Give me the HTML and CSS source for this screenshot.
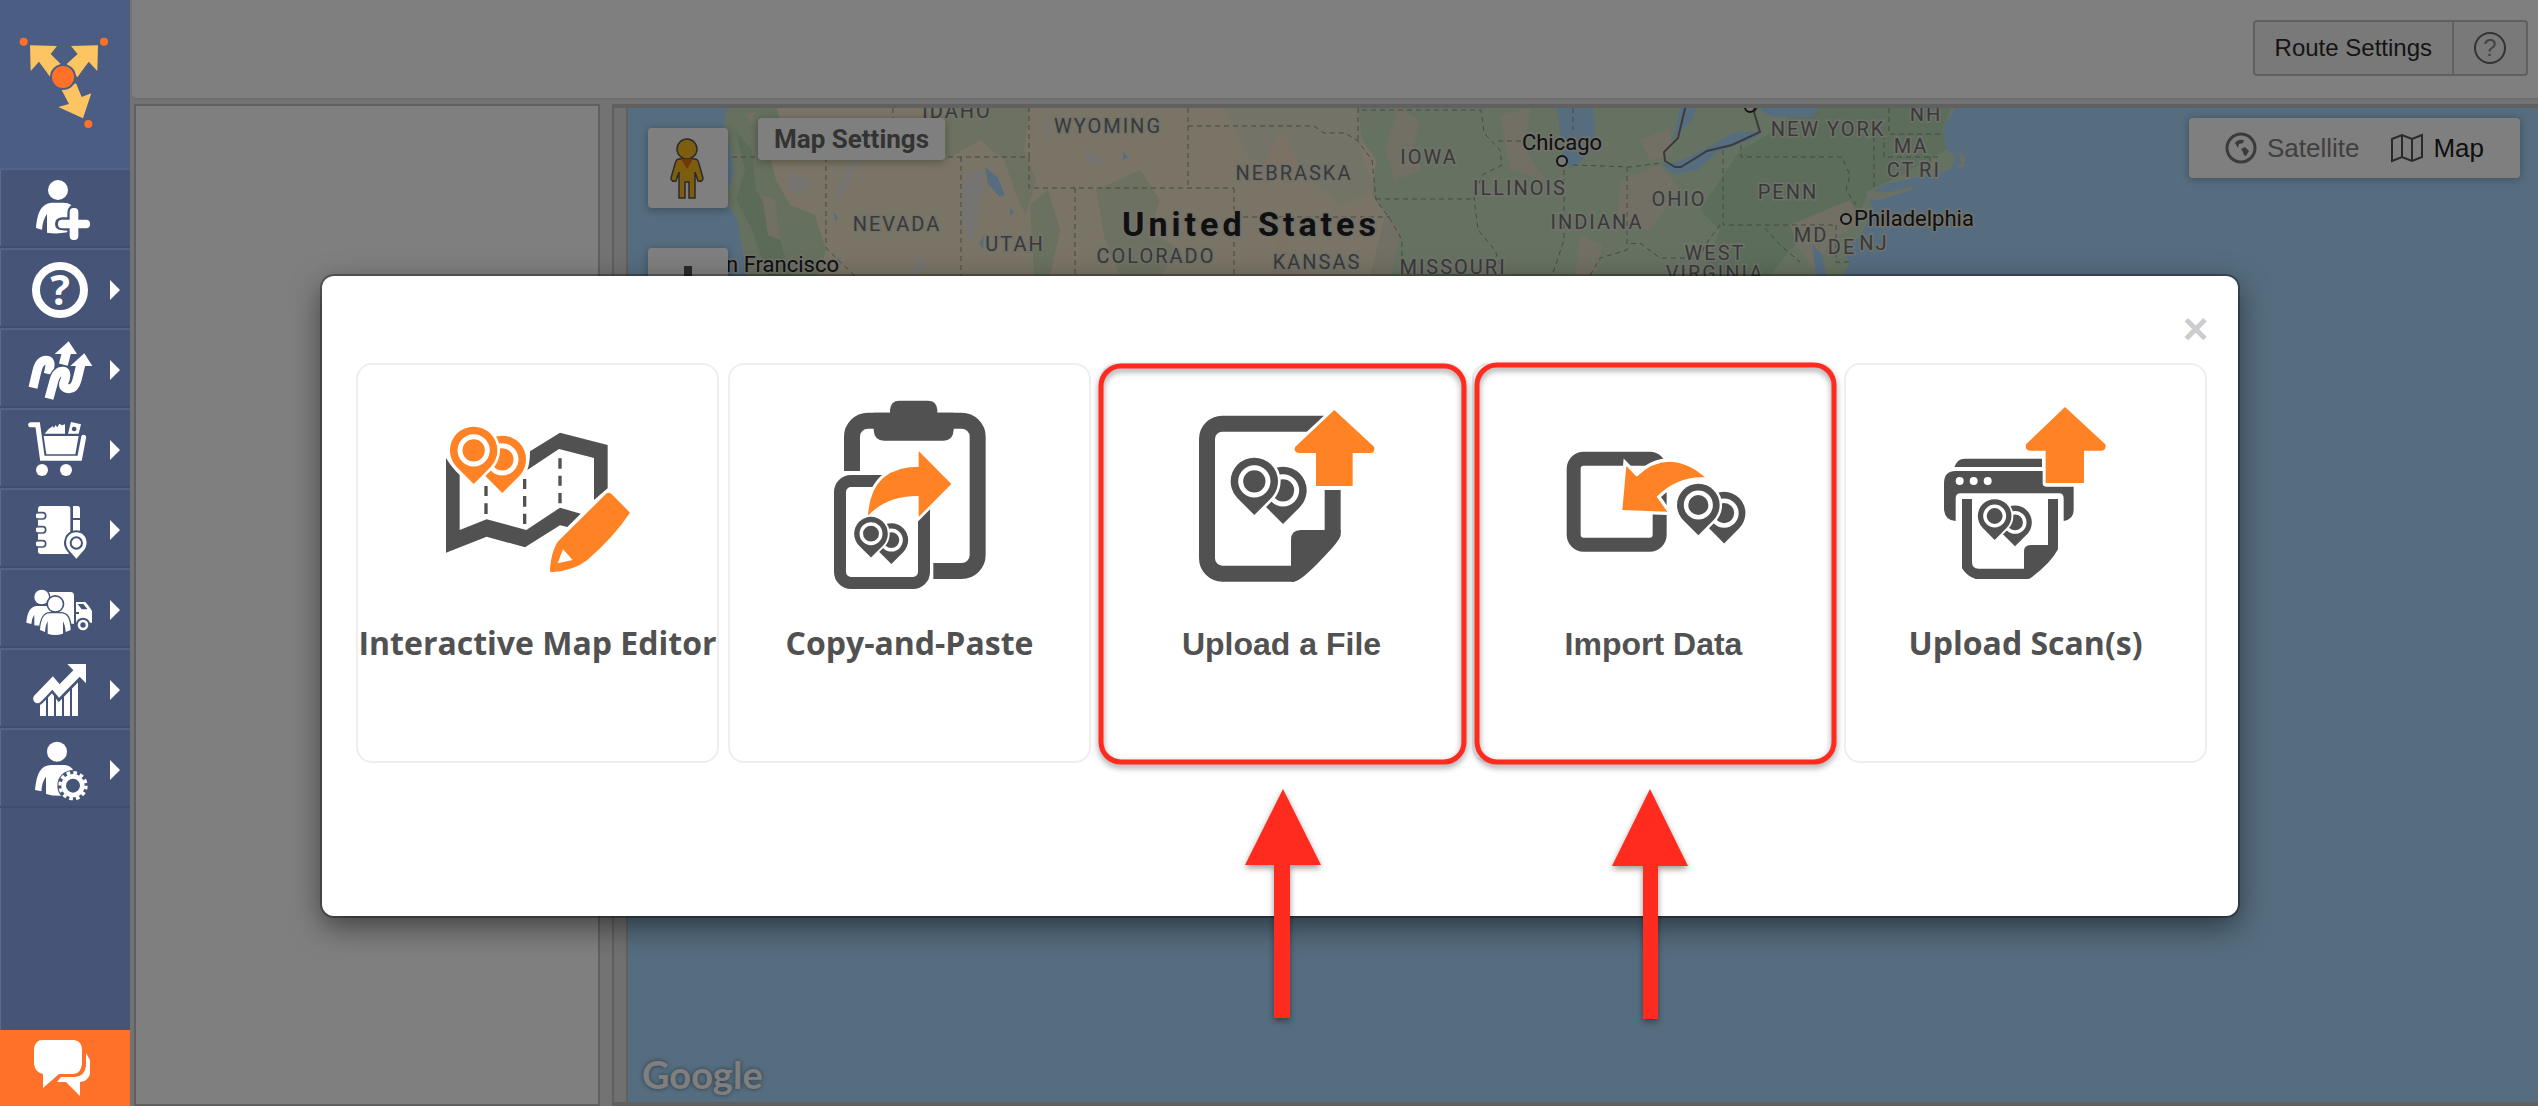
FILE: index.html
```html
<!DOCTYPE html>
<html lang="en">
<head>
    <meta charset="UTF-8">
    <meta name="viewport" content="width=device-width, initial-scale=1.0">
    <title>Route Planner</title>
    <link rel="stylesheet" href="styles.css">
</head>
<body>
    <!-- Shared shapes -->
    <svg class="defs" aria-hidden="true">
        <defs>
            <path id="pin" d="M0 101 L-51 50 C-64 36 -71 18 -71 0 A71 71 0 0 1 71 0 C71 18 64 36 51 50 Z"/>
            <g id="pins">
                <g transform="translate(86 27)">
                    <use href="#pin" fill="currentColor"/>
                    <circle r="41" fill="none" stroke="#fff" stroke-width="15"/>
                </g>
                <use href="#pin" fill="currentColor" stroke="#fff" stroke-width="16" paint-order="stroke"/>
                <circle r="41" fill="none" stroke="#fff" stroke-width="15"/>
            </g>
        </defs>
    </svg>

    <nav class="sidebar">
        <a class="logo" href="#" aria-label="Home">
            <svg viewBox="0 0 390 504">
                <g fill="#fdc562">
                    <path d="M90 136 L171 138 L152 162 L182 192 L150 230 L117 185 L92 213Z"/>
                    <path d="M294 136 L213 138 L233 162 L200 192 L232 232 L266 185 L292 213Z"/>
                    <path d="M185 270 L228 250 L245 291 L274 280 L249 355 L175 321 L207 312Z"/>
                </g>
                <circle cx="189" cy="231" r="36" fill="#ff7128" stroke="#4c5d83" stroke-width="6"/>
                <g fill="#ff7128">
                    <circle cx="71" cy="125" r="12"/>
                    <circle cx="312" cy="125" r="12"/>
                    <circle cx="265" cy="372" r="12"/>
                </g>
            </svg>
        </a>
        <a class="nav-item" href="#" aria-label="Add user">
            <svg viewBox="0 510 390 228">
                <circle cx="174" cy="570" r="30"/>
                <path d="M108 684 C112 640 122 608 160 608 H190 Q205 608 214 615 Q202 624 202 640 V652 H186 Q165 654 165 672 Q166 690 186 691 L202 692 V697 Q170 703 141 698 V642 Q128 660 126 689Z"/>
                <rect x="174" y="659" width="96" height="26" rx="12"/>
                <rect x="209" y="624" width="26" height="96" rx="12"/>
            </svg>
        </a>
        <a class="nav-item" href="#" aria-label="Help">
            <svg viewBox="0 750 390 228">
                <circle cx="180" cy="870" r="72" fill="none" stroke="#fff" stroke-width="24"/>
                <text class="help-mark" x="180" y="915" text-anchor="middle">?</text>
                <path d="M330 840 L360 870 L330 900Z"/>
            </svg>
        </a>
        <a class="nav-item" href="#" aria-label="Routes">
            <svg viewBox="0 990 390 228">
                <g fill="none" stroke="#fff" stroke-width="27">
                    <path d="M99 1163 L110 1116 Q118 1081 138 1081 Q154 1081 149 1102 L145 1122"/>
                    <path d="M190 1094 L200 1056"/>
                    <path d="M147 1196 L161 1145 Q169 1114 188 1114 Q202 1114 196 1136 L191 1150 Q188 1166 208 1166 Q224 1166 231 1140 L243 1092" stroke="#455477" stroke-width="35"/>
                    <path d="M147 1196 L161 1145 Q169 1114 188 1114 Q202 1114 196 1136 L191 1150 Q188 1166 208 1166 Q224 1166 231 1140 L243 1092"/>
                </g>
                <path d="M206 1024 L231 1062 H164Z"/>
                <path d="M253 1060 L277 1098 H211Z"/>
                <path d="M330 1080 L360 1110 L330 1140Z"/>
            </svg>
        </a>
        <a class="nav-item" href="#" aria-label="Orders">
            <svg viewBox="0 30 390 228">
                <path d="M92 74 H113 L127 175 H239 L251 112" fill="none" stroke="#fff" stroke-width="15" stroke-linecap="round"/>
                <path d="M131 108 H236 L226 163 H139Z"/>
                <path d="M134 101 Q145 85 158 79 L162 84 L166 75 L172 82 L178 71 L186 76 L195 73 V101Z"/>
                <path fill-rule="evenodd" d="M204 101 L213 66 L243 73 L236 101Z M222 80 a7 7 0 1 0 1 0Z"/>
                <circle cx="126" cy="210" r="18"/>
                <circle cx="198" cy="210" r="18"/>
                <path d="M330 120 L360 150 L330 180Z"/>
            </svg>
        </a>
        <a class="nav-item" href="#" aria-label="Address book">
            <svg viewBox="0 270 390 228">
                <rect x="114" y="318" width="97" height="144" rx="8"/>
                <path d="M219 318 H232 Q240 318 240 328 V354 H219Z M219 360 H240 V420 H219Z"/>
                <g fill="#fff" stroke="#455477" stroke-width="5">
                    <rect x="104" y="338" width="33" height="19" rx="9"/>
                    <rect x="104" y="380" width="33" height="19" rx="9"/>
                    <rect x="104" y="422" width="33" height="19" rx="9"/>
                </g>
                <rect x="98" y="330" width="10" height="120" fill="#455477"/>
                <path d="M229 476 L206 450 C190 430 200 397 229 397 C258 397 268 430 252 450Z" stroke="#455477" stroke-width="12" paint-order="stroke"/>
                <circle cx="229" cy="429" r="17" stroke="#455477" stroke-width="6"/>
                <path d="M330 360 L360 390 L330 420Z"/>
            </svg>
        </a>
        <a class="nav-item" href="#" aria-label="Team">
            <svg viewBox="0 510 390 228">
                <path d="M144 576 H212 Q222 576 222 588 V671 H144Z"/>
                <path fill-rule="evenodd" d="M228 606 H256 Q266 616 276 633 V668 H228Z M233 612 H250 L263 628 H245Z M228 636 H237 V642 H228Z"/>
                <circle cx="249" cy="675" r="16" stroke="#455477" stroke-width="12" paint-order="stroke"/>
                <circle cx="249" cy="675" r="8" fill="#455477"/>
                <circle cx="125" cy="591" r="22" stroke="#455477" stroke-width="8" paint-order="stroke"/>
                <path d="M79 668 C82 638 90 618 112 618 H145 V680 L103 676 V644 Q95 655 94 672Z"/>
                <path d="M120 690 C123 655 132 640 150 640 H182 C202 640 210 655 212 690 L197 696 Q195 674 189 664 V701 Q164 709 143 701 V664 Q137 674 135 696Z" stroke="#455477" stroke-width="8" paint-order="stroke"/>
                <circle cx="166" cy="612" r="22" stroke="#455477" stroke-width="10" paint-order="stroke"/>
                <path d="M330 600 L360 630 L330 660Z"/>
            </svg>
        </a>
        <a class="nav-item" href="#" aria-label="Analytics">
            <svg viewBox="0 750 390 228">
                <path d="M120 900 H138 V948 H120Z M144 875 H162 V948 H144Z M168 880 H186 V948 H168Z M192 870 H210 V948 H192Z M216 840 H234 V948 H216Z"/>
                <g fill="none" stroke-linecap="round">
                    <path d="M113 896 L158 849 L178 876 L236 816" stroke="#455477" stroke-width="40"/>
                    <path d="M113 896 L158 849 L178 873 L234 816" stroke="#fff" stroke-width="27"/>
                </g>
                <path d="M202 792 H258 V850Z"/>
                <path d="M330 840 L360 870 L330 900Z"/>
            </svg>
        </a>
        <a class="nav-item" href="#" aria-label="Account settings">
            <svg viewBox="0 990 390 228">
                <circle cx="171" cy="1055" r="30"/>
                <path d="M105 1170 C110 1120 122 1095 155 1095 H188 C208 1095 216 1102 222 1115 V1184 Q170 1192 138 1182 V1130 Q126 1144 124 1174Z"/>
                <circle cx="219" cy="1157" r="47" fill="#455477"/>
                <circle cx="219" cy="1157" r="39" fill="none" stroke="#fff" stroke-width="10" stroke-dasharray="11 9.4"/>
                <circle cx="219" cy="1157" r="28" fill="none" stroke="#fff" stroke-width="14"/>
                <path d="M330 1080 L360 1110 L330 1140Z"/>
            </svg>
        </a>
        <button class="chat" type="button" aria-label="Chat">
            <svg viewBox="0 1030 130 76">
                <path d="M34 1048 Q36 1040 42 1040 H74 Q82 1041 82 1050 V1064 Q81 1073 74 1074 H59 L43 1088 V1074 Q35 1072 34 1064Z"/>
                <path d="M86 1053 L90 1060 V1074 Q88 1081 80 1082 V1096 L66 1082 H57 L61 1077 H75 Q85 1076 86 1066Z"/>
            </svg>
        </button>
    </nav>

    <main class="main">
        <header class="header">
            <div class="button-group">
                <button class="route-settings" type="button">Route Settings</button>
                <button class="route-help" type="button" aria-label="Route settings help"><span>?</span></button>
            </div>
        </header>

        <div class="panels">
            <section class="route-list"></section>
            <section class="map-panel">
                <div class="map">
                    <svg class="map-canvas" viewBox="628 108 1910 994" preserveAspectRatio="xMinYMin slice">
                        <!-- Land, west half -->
                        <path fill="#f3e9cb" d="M729 100 L724 127 L731 150 L734 173 L726 200 L738 220 L742 247 L745 263 L760 310 L860 400 H1780 L1842 276 L1849 263 L1845 253 L1863 230 L1872 210 L1868 194 L1885 184 L1927 175 L1950 170 L1955 157 L1946 150 L1943 127 L1955 100Z"/>
                        <g fill="#cbe0bd">
                            <path d="M729 100 H775 L780 120 L768 150 L776 180 L790 205 L815 215 L826 250 L818 276 H747 L742 247 L738 220 L726 200 L734 173 L731 150 L724 127Z"/>
                            <path fill="#b9d6ae" d="M735 130 L752 150 L756 190 L776 225 L790 276 H768 L752 230 L736 200 L745 170Z"/>
                            <path fill="#dbe3c3" d="M946 108 H1030 L1024 150 L1036 180 L1026 215 L1018 200 L1004 160 L980 140 L946 160Z"/>
                            <path fill="#dbe3c3" d="M1096 190 L1140 170 L1160 200 L1150 230 L1180 250 L1160 276 H1120 L1105 240Z"/>
                            <path fill="#d6e2c1" d="M1030 205 L1048 190 L1060 230 L1050 276 H1034Z"/>
                            <path fill="#e6e7ce" d="M1225 108 H1380 L1360 150 L1375 190 L1340 205 L1300 170 L1250 160Z"/>
                            <path fill="#cde5c3" d="M1358 108 H1955 L1943 127 L1946 150 L1955 157 L1950 170 L1927 175 L1885 184 L1868 194 L1872 210 L1863 230 L1845 253 L1849 263 L1842 276 H1385 L1395 225 L1372 195 L1376 160 L1362 140Z"/>
                            <path fill="#b9dab6" d="M1740 150 L1780 128 L1800 100 H1955 L1943 127 L1946 150 L1900 176 L1870 190 L1858 215 L1820 222 L1790 250 L1770 276 H1700 L1720 230 L1700 210Z"/>
                        </g>
                        <!-- Dry patches -->
                        <g fill="#e4e1c8">
                            <path d="M1398 108 L1420 120 L1412 150 L1422 170 L1395 180 L1385 150Z"/>
                            <path d="M1500 115 L1530 108 L1525 150 L1545 180 L1510 170Z"/>
                            <path d="M1620 180 L1660 165 L1680 190 L1650 230 L1618 220Z"/>
                            <path d="M1385 215 L1400 230 L1392 276 H1370Z"/>
                            <path d="M1580 235 L1602 245 L1595 276 H1575Z"/>
                            <path d="M1640 140 L1670 128 L1672 155 L1650 160Z"/>
                            <path d="M1790 225 L1850 200 L1860 222 L1830 240 L1815 270 L1800 250Z"/>
                            <path d="M762 195 L775 200 L780 240 L768 235Z"/>
                            <path d="M745 115 L755 112 L753 124Z"/>
                        </g>
                        <path fill="#f6e3cb" d="M1280 130 L1298 160 L1290 185 L1262 170Z M1280 230 L1300 276 H1270Z"/>
                        <g fill="#ebe9e6">
                            <path d="M965 172 L985 170 L978 215 L972 245 L962 222Z"/>
                            <path d="M848 168 L860 160 L842 195 L830 205Z"/>
                            <path d="M790 172 L810 180 L800 195 L788 188Z"/>
                            <path d="M1084 148 L1105 160 L1090 166Z"/>
                            <path d="M918 256 L928 266 L918 276 H912Z"/>
                            <path d="M1046 122 L1052 130 L1044 140Z"/>
                        </g>
                        <!-- Water -->
                        <g fill="#aadaff">
                            <path d="M985 167 L998 178 L1005 195 L1000 197 L988 184Z"/>
                            <path d="M1123 152 L1128 157 L1123 160Z M1010 208 L1014 212 L1010 217Z M834 212 L838 218 L835 221Z M983 250 L979 243 L984 235Z"/>
                            <path d="M1556 100 L1559 124 L1562 150 L1569 168 L1579 163 L1592 150 L1595 127 L1592 100Z"/>
                            <path d="M1661 165 L1675 174 L1698 170 L1716 153 L1757 137 L1760 131 L1733 133 L1707 148 L1680 161Z"/>
                            <path d="M1682 100 H1697 L1694 118 L1672 140 L1676 128Z"/>
                            <path d="M1757 100 L1762 112 L1775 117 H1812 L1825 100Z"/>
                            <path d="M1812 244 L1822 254 L1826 276 H1816Z"/>
                        </g>
                        <path fill="#d9dfc6" d="M1866 191 L1890 192 L1914 186 L1912 190 L1880 200 L1868 199Z M1958 150 L1965 158 L1964 167 L1955 168 L1961 163Z"/>
                        <!-- Borders -->
                        <g class="borders">
                            <path d="M893 108 V118 M732 157 H1029 V108 M826 157 V248 L855 276 M961 157 V276 M1029 157 V188 H1234 M1188 108 V188 M1188 126 H1314 L1324 133 H1345 L1358 141 L1372 160 L1376 200 L1392 222 L1402 240 V276"/>
                            <path d="M1075 188 V276 M1234 188 V276 M1234 217 H1390"/>
                            <path d="M1358 108 V141 M1362 110 H1481 L1484 133 L1500 150 L1502 165 L1482 175 L1474 198 L1478 230 L1495 250 L1504 276 M1376 199 H1472 M1498 141 H1522 M1564 170 V240 L1552 276 M1573 165 L1630 167 L1662 163 M1627 167 V250 L1600 258 L1590 276 M1573 108 V130 M1723 150 V225 H1833 M1741 145 V157 H1842 L1850 175 L1846 190 L1856 205 M1720 225 L1705 245 L1700 258 L1660 258 L1640 243 L1627 244"/>
                            <path d="M1889 108 V134 H1940 M1884 134 V157 H1938 M1930 157 V174 M1874 187 V134 M1836 225 V262 H1850 M1765 228 L1780 245 L1800 262"/>
                        </g>
                        <path class="coast-line" d="M1687 100 L1678 138 L1664 152 L1665 161 L1675 167 H1681 L1707 151 L1732 145 L1760 132 L1754 112 L1762 100"/>
                        <circle class="city" cx="1562" cy="161" r="5"/>
                        <circle class="city" cx="1846" cy="219" r="5"/>
                        <circle class="city" cx="1750" cy="107" r="5"/>
                        <!-- Labels -->
                        <g class="state">
                            <text x="957" y="118">IDAHO</text>
                            <text x="1108" y="133">WYOMING</text>
                            <text x="897" y="231">NEVADA</text>
                            <text x="1015" y="251">UTAH</text>
                            <text x="1156" y="263">COLORADO</text>
                            <text x="1294" y="180">NEBRASKA</text>
                            <text x="1317" y="269">KANSAS</text>
                            <text x="1429" y="164">IOWA</text>
                            <text x="1520" y="195">ILLINOIS</text>
                            <text x="1597" y="229">INDIANA</text>
                            <text x="1679" y="206">OHIO</text>
                            <text x="1453" y="274">MISSOURI</text>
                            <text x="1715" y="260">WEST</text>
                            <text x="1715" y="280">VIRGINIA</text>
                            <text x="1828" y="136">NEW YORK</text>
                            <text x="1926" y="121">NH</text>
                            <text x="1911" y="153">MA</text>
                            <text x="1901" y="177">CT</text>
                            <text x="1930" y="177">RI</text>
                            <text x="1788" y="199">PENN</text>
                            <text x="1811" y="242">MD</text>
                            <text x="1842" y="254">DE</text>
                            <text x="1874" y="250">NJ</text>
                        </g>
                        <g class="town">
                            <text x="1562" y="150" text-anchor="middle">Chicago</text>
                            <text x="1854" y="226">Philadelphia</text>
                            <text x="839" y="272" text-anchor="end">San Francisco</text>
                        </g>
                        <text class="country" x="1251" y="236">United States</text>
                    </svg>

                    <div class="map-left">
                        <div class="map-buttons">
                            <button class="map-button" type="button" aria-label="Street view">
                                <svg viewBox="0 0 80 80">
                                    <g fill="#fbba20" stroke="#555" stroke-width="1.5">
                                        <path d="M31 31 H47 Q50 31 51 36 L55 50 Q55 54 50 53 L47 44 V70 H41 V54 H37 V70 H31 V44 L28 53 Q23 54 23 50 L27 36 Q28 31 31 31Z"/>
                                        <circle cx="39" cy="21" r="10"/>
                                    </g>
                                    <path d="M33 31 H45 L39 41Z" fill="#e0701c"/>
                                </svg>
                            </button>
                            <button class="map-button" type="button" aria-label="Zoom in">
                                <svg viewBox="0 0 80 80"><path d="M36 18 h8 v16 h16 v8 h-16 v16 h-8 v-16 h-16 v-8 h16z" fill="#555"/></svg>
                            </button>
                        </div>
                        <button class="map-settings" type="button">Map Settings</button>
                    </div>

                    <div class="map-type">
                        <button class="type-button" type="button">
                            <svg viewBox="0 0 32 32">
                                <circle cx="16" cy="16" r="14" fill="none" stroke="#777" stroke-width="3"/>
                                <path d="M10 11 Q13 7 19 8 L18 11 L14 12 L13 16Z M16 17 L20 15 L24 19 L21 24 Q18 23 18 20Z" fill="#777"/>
                            </svg>
                            Satellite
                        </button>
                        <button class="type-button active" type="button">
                            <svg viewBox="0 0 32 32">
                                <path d="M1 7 L11 3 L21 7 L31 3 V25 L21 29 L11 25 L1 29Z M11 3 V25 M21 7 V29" fill="none" stroke="#555" stroke-width="2"/>
                            </svg>
                            Map
                        </button>
                    </div>
                    <div class="google">Google</div>
                </div>
            </section>
        </div>

        <div class="backdrop">
            <div class="modal" role="dialog" aria-label="Add addresses">
                <button class="close" type="button" aria-label="Close">×</button>
                <div class="cards">
                    <button class="card" type="button">
                        <svg viewBox="232 105 720 708">
                            <g fill="#515151">
                                <path d="M316 324 V608 L438 560 L553 592 L658 526 L680 531 L720 491 L658 473 L557 540 L438 508 L357 540 V375 Q335 355 316 324Z"/>
                                <path d="M568 304 L658 248 L801 285 V415 L760 450 V324 L655 297 L560 360 Q568 340 568 304Z"/>
                                <path d="M431 408 h10 v30 h-10z M431 460 h10 v32 h-10z M547 387 h10 v30 h-10z M547 438 h10 v32 h-10z M547 491 h10 v31 h-10z M653 325 h10 v31 h-10z M653 377 h10 v30 h-10z M653 429 h10 v31 h-10z"/>
                            </g>
                            <path fill="#ff8225" d="M798 430 Q804 426 812 431 L868 488 Q820 560 740 630 Q700 662 632 667 Q627 666 628 655 Q632 610 648 580 Q652 574 660 566Z"/>
                            <path fill="#fff" d="M667 598 L696 630 L651 640Z"/>
                            <use href="#pins" x="399" y="301" color="#ff8225"/>
                        </svg>
                        <span>Interactive Map Editor</span>
                    </button>
                    <button class="card" type="button">
                        <svg viewBox="208 105 720 708">
                            <path fill="none" stroke="#515151" stroke-width="48" d="M394 363 V260 A48 48 0 0 1 442 212 H723 A48 48 0 0 1 771 260 V615 A48 48 0 0 1 723 663 H638"/>
                            <path fill="#515151" d="M508 188 V180 Q510 152 536 152 H622 Q648 152 650 180 V188 H699 V240 Q697 272 668 272 H490 Q461 272 459 240 V188Z"/>
                            <path fill="none" stroke="#515151" stroke-width="36" d="M500 393 H391 A33 33 0 0 0 358 426 V666 A33 33 0 0 0 391 699 H577 A33 33 0 0 0 610 666 V470"/>
                            <path fill="#ff8225" stroke="#fff" stroke-width="16" paint-order="stroke" d="M442 497 Q450 350 594 350 V303 L692 402 L594 501 V438 Q500 436 442 497Z"/>
                            <use href="#pins" transform="translate(451 551) scale(.71)" color="#515151"/>
                        </svg>
                        <span>Copy-and-Paste</span>
                    </button>
                    <button class="card card-alt" type="button">
                        <svg viewBox="214 105 720 708">
                            <g fill="none" stroke="#515151" stroke-width="48">
                                <path d="M700 221 H395 A46 46 0 0 0 349 267 V625 A46 46 0 0 0 395 671 H612"/>
                                <path d="M726 420 V548"/>
                            </g>
                            <path fill="#515151" d="M601 695 V570 Q601 540 630 540 H750 V556 Q745 575 700 620 Q630 695 608 695Z"/>
                            <path fill="#ff8225" stroke="#fff" stroke-width="18" paint-order="stroke" d="M731 180 L850 290 Q856 307 838 309 H786 V408 H676 V309 H625 Q606 305 614 290Z"/>
                            <use href="#pins" x="491" y="394" color="#515151"/>
                        </svg>
                        <span>Upload a File</span>
                    </button>
                    <button class="card card-alt" type="button">
                        <svg viewBox="220 105 720 708">
                            <rect x="339" y="326" width="258" height="258" rx="30" fill="none" stroke="#515151" stroke-width="42"/>
                            <path fill="#ff8225" stroke="#fff" stroke-width="20" paint-order="stroke" d="M497 348 L528 380 Q575 335 625 335 Q680 335 733 382 Q650 378 588 440 L620 485 L485 480Z"/>
                            <use href="#pins" transform="translate(713 465) scale(.9)" color="#515151"/>
                        </svg>
                        <span>Import Data</span>
                    </button>
                    <button class="card" type="button">
                        <svg viewBox="226 105 720 708">
                            <g fill="#515151">
                                <path d="M371 351 Q380 326 402 326 H634 V351Z"/>
                                <path d="M340 400 Q340 363 375 363 H636 V400 Q636 410 646 410 H729 V480 Q729 508 699 513 V445 Q699 430 685 430 H390 Q375 430 375 445 V513 Q344 512 340 480Z"/>
                                <path d="M394 447 H424 V636 Q424 656 444 656 H580 V605 Q580 585 600 585 H652 V447 H682 V598 Q660 640 600 684 Q597 687 590 687 H435 Q410 680 394 655Z"/>
                            </g>
                            <g fill="#fff">
                                <circle cx="387" cy="393" r="12"/>
                                <circle cx="429" cy="393" r="12"/>
                                <circle cx="471" cy="393" r="12"/>
                            </g>
                            <path fill="#ff8225" d="M703 171 L824 283 Q828 302 812 302 H760 V399 H645 V302 H598 Q582 300 586 283Z"/>
                            <use href="#pins" transform="translate(492 498) scale(.71)" color="#515151"/>
                        </svg>
                        <span>Upload Scan(s)</span>
                    </button>
                </div>

                <!-- Red frames and arrows over the two highlighted cards -->
                <svg class="annotations" viewBox="322 276 1916 760">
                    <g fill="none" stroke="#ff2b1f" stroke-width="5">
                        <rect x="1101" y="366" width="363" height="396" rx="20"/>
                        <rect x="1477" y="365" width="357" height="397" rx="20"/>
                    </g>
                    <g fill="#ff2b1f">
                        <path d="M1283 789 L1321 865 H1290 V1018 H1274 V865 H1245Z"/>
                        <path d="M1650 789 L1688 866 H1658 V1019 H1643 V866 H1612Z"/>
                    </g>
                </svg>
            </div>
        </div>
    </main>
</body>
</html>
```

FILE: styles.css
```css
* {
    box-sizing: border-box;
}

body {
    font-family: "Liberation Sans", Arial, sans-serif;
    background-color: #e6e6e6;
    margin: 0;
    display: flex;
    height: 100vh;
    overflow: hidden;
}

button {
    font-family: inherit;
    margin: 0;
    padding: 0;
    border: none;
    background: none;
    cursor: pointer;
}

svg {
    display: block;
}

.defs {
    position: absolute;
    width: 0;
    height: 0;
}

/* Sidebar */
.sidebar {
    flex: none;
    width: 130px;
    display: flex;
    flex-direction: column;
    background-color: #455477;
    box-shadow: inset 1px 0 0 #5b6b90;
}

.logo {
    height: 168px;
    background-color: #4c5d83;
}

.nav-item {
    height: 80px;
    border-top: 2px solid #52628a;
    border-bottom: 2px solid #3f4d70;
    fill: #fff;
}

.help-mark {
    font-family: "Open Sans", sans-serif;
    font-size: 124px;
    font-weight: bold;
}

.chat {
    margin-top: auto;
    height: 76px;
    background-color: #ff7128;
    fill: #fff;
}

/* Main area */
.main {
    position: relative;
    flex: 1;
    min-width: 0;
    display: flex;
    flex-direction: column;
    gap: 4px;
    padding-left: 2px;
}

.header {
    flex: none;
    height: 100px;
    display: flex;
    justify-content: flex-end;
    align-items: flex-start;
    padding: 20px 10px;
    background-color: #fff;
    border-bottom: 2px solid #dcdcdc;
    border-bottom-left-radius: 6px;
}

.button-group {
    display: flex;
    height: 56px;
    border: 2px solid #c0c0c0;
    border-radius: 4px;
    background-color: #f3f3f3;
}

.route-settings {
    padding: 0 20px;
    font-size: 24px;
    color: #2a2a2a;
    border-right: 2px solid #c0c0c0;
}

.route-help {
    width: 72px;
    display: flex;
    justify-content: center;
    align-items: center;
}

.route-help span {
    width: 32px;
    height: 32px;
    line-height: 28px;
    border: 2px solid #666;
    border-radius: 50%;
    font-size: 24px;
    color: #888;
}

.panels {
    flex: 1;
    min-height: 0;
    display: flex;
    gap: 12px;
    padding-left: 2px;
}

.route-list {
    flex: none;
    width: 466px;
    background-color: #fff;
    border: 2px solid #c0c0c0;
}

.map-panel {
    flex: 1;
    min-width: 0;
    padding-left: 12px;
    background-color: #e0e0e0;
    border: solid #c0c0c0;
    border-width: 4px 0 4px 2px;
}

.map {
    position: relative;
    height: 100%;
    border-left: 2px solid #c0c0c0;
    background-color: #aadaff;
    overflow: hidden;
}

.map-canvas {
    width: 100%;
    height: 100%;
    font-family: Roboto, sans-serif;
}

.borders {
    fill: none;
    stroke: #8f8f86;
    stroke-width: 1;
    stroke-dasharray: 5 4;
}

.coast-line {
    fill: none;
    stroke: #777;
    stroke-width: 2;
}

.city {
    fill: #eee;
    stroke: #222;
    stroke-width: 2;
}

.state {
    font-size: 20px;
    letter-spacing: 2px;
    text-anchor: middle;
    fill: #6f7573;
    stroke: #e4e3d6;
    stroke-width: 3;
    paint-order: stroke;
}

.town {
    font-size: 22px;
    fill: #202020;
    stroke: #e4e3d6;
    stroke-width: 3;
    paint-order: stroke;
}

.country {
    font-size: 34px;
    font-weight: bold;
    letter-spacing: 4px;
    text-anchor: middle;
    fill: #202020;
    stroke: #e4e3d6;
    stroke-width: 3;
    paint-order: stroke;
}

.map-left {
    position: absolute;
    top: 10px;
    left: 20px;
    display: flex;
    align-items: flex-start;
    gap: 30px;
}

.map-buttons {
    display: flex;
    flex-direction: column;
    gap: 40px;
    padding-top: 10px;
}

.map-button {
    width: 80px;
    height: 80px;
    background-color: #fff;
    border-radius: 4px;
    box-shadow: 0 2px 8px rgba(0, 0, 0, 0.3);
}

.map-settings {
    height: 42px;
    padding: 0 16px;
    font-family: Roboto, sans-serif;
    font-size: 26px;
    font-weight: bold;
    color: #666;
    background-color: #fff;
    border-radius: 4px;
    box-shadow: 0 2px 8px rgba(0, 0, 0, 0.3);
}

.map-type {
    position: absolute;
    top: 10px;
    right: 18px;
    height: 60px;
    display: flex;
    gap: 32px;
    padding: 0 36px;
    background-color: #fff;
    border-radius: 4px;
    box-shadow: 0 1px 8px rgba(0, 0, 0, 0.3);
}

.type-button {
    display: flex;
    align-items: center;
    gap: 10px;
    font-size: 26px;
    color: #808080;
}

.type-button svg {
    width: 32px;
    height: 32px;
}

.type-button.active {
    color: #202020;
}

.google {
    position: absolute;
    left: 14px;
    bottom: 4px;
    font-family: Lato, sans-serif;
    font-size: 38px;
    font-weight: bold;
    line-height: 48px;
    color: #fff;
    text-shadow: 0 0 4px rgba(0, 0, 0, 0.5);
}

/* Modal */
.backdrop {
    position: absolute;
    top: 0;
    right: 0;
    bottom: 0;
    left: 0;
    padding: 276px 300px 0 192px;
    background-color: rgba(0, 0, 0, 0.5);
}

.modal {
    position: relative;
    height: 640px;
    padding: 22px 31px 0 34px;
    display: flex;
    flex-direction: column;
    background-color: #fff;
    border-radius: 12px;
    box-shadow: 0 0 0 2px rgba(0, 0, 0, 0.3), 0 10px 30px rgba(0, 0, 0, 0.5);
}

.close {
    align-self: flex-end;
    width: 23px;
    height: 65px;
    font-size: 44px;
    font-weight: bold;
    line-height: 65px;
    padding-bottom: 4px;
    color: #ccc;
    display: flex;
    justify-content: center;
    align-items: center;
}

.cards {
    display: grid;
    grid-template-columns: repeat(5, 1fr);
    gap: 9px;
}

.card {
    min-width: 0;
    height: 400px;
    padding-top: 20px;
    display: flex;
    flex-direction: column;
    align-items: center;
    border: 2px solid #eee;
    border-radius: 16px;
    font-family: "Open Sans", sans-serif;
    font-size: 32px;
    font-weight: bold;
    line-height: 44px;
    white-space: nowrap;
    color: #515151;
}

.card svg {
    width: 240px;
    height: 236px;
}

.card-alt {
    font-family: "Liberation Sans", Arial, sans-serif;
    line-height: 46px;
}

.annotations {
    position: absolute;
    top: 0;
    left: 0;
    width: 100%;
    pointer-events: none;
    filter: drop-shadow(0 3px 3px rgba(0, 0, 0, 0.4));
}
```
